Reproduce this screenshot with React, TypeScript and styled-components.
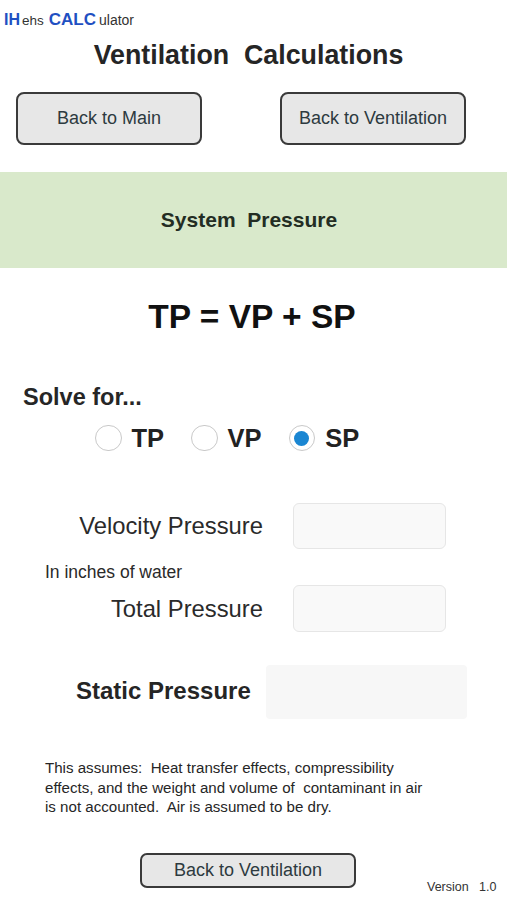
import React, { useState } from "react";
import styled, { createGlobalStyle } from "styled-components";

const Global = createGlobalStyle`
  html, body { margin: 0; padding: 0; background: #ffffff; }
  body { font-family: "Liberation Sans", Arial, Helvetica, sans-serif; color: #222; }
  * { box-sizing: border-box; }
`;

const Page = styled.div`
  width: 507px;
  min-height: 900px;
  display: flex;
  flex-direction: column;
  background: #fff;
`;

const Logo = styled.div`
  padding: 10px 0 0 4px;
  height: 30px;
  line-height: 20px;
  white-space: nowrap;
  color: #333;
`;

const LogoPart = styled.span<{ $strong?: boolean; $size: number; $gap: number }>`
  font-size: ${(p) => p.$size}px;
  font-weight: ${(p) => (p.$strong ? 700 : 400)};
  color: ${(p) => (p.$strong ? "#1f50c2" : "#333")};
  margin-right: ${(p) => p.$gap}px;
`;

const Title = styled.h1`
  margin: 9px 0 0;
  padding-right: 10px;
  font-size: 26.8px;
  line-height: 32px;
  font-weight: 700;
  text-align: center;
  color: #252525;
  white-space: pre;
`;

const TopButtons = styled.div`
  margin-top: 21px;
  display: flex;
  gap: 78px;
  padding-left: 16px;
`;

const Button = styled.button<{ $w: number; $h: number }>`
  width: ${(p) => p.$w}px;
  height: ${(p) => p.$h}px;
  border: 2px solid #3a3a3a;
  border-radius: ${(p) => (p.$h > 40 ? 8 : 7)}px;
  background: #e7e7e7;
  font-family: "Liberation Sans", Arial, sans-serif;
  font-size: 18px;
  color: #2d3a40;
  padding: 0;
  cursor: pointer;
`;

const Band = styled.div`
  margin-top: 27px;
  height: 96px;
  padding-right: 9px;
  background: #d9e9cb;
  display: flex;
  align-items: center;
  justify-content: center;
  font-size: 21px;
  font-weight: 700;
  color: #232d23;
  white-space: pre;
`;

const Formula = styled.div`
  margin-top: 29px;
  padding-right: 3px;
  line-height: 40px;
  font-size: 33.5px;
  font-weight: 700;
  text-align: center;
  color: #111;
`;

const SolveFor = styled.div`
  margin-top: 46px;
  padding-left: 23px;
  line-height: 28px;
  font-size: 23.5px;
  font-weight: 700;
  color: #262626;
`;

const RadioRow = styled.div`
  margin-top: 13px;
  display: flex;
  padding-left: 95px;
  gap: 27px;
  height: 28px;
  align-items: center;
`;

const RadioItem = styled.label`
  display: flex;
  align-items: center;
  gap: 10px;
  font-size: 25.5px;
  font-weight: 700;
  color: #222;
  cursor: pointer;
`;

const Circle = styled.span<{ $on: boolean }>`
  width: 26.5px;
  height: 26.5px;
  border-radius: 50%;
  border: 1.5px solid #c9c9c9;
  background: #fff;
  display: flex;
  align-items: center;
  justify-content: center;
  &::after {
    content: "";
    width: 15px;
    height: 15px;
    border-radius: 50%;
    background: ${(p) => (p.$on ? "#1a86d2" : "transparent")};
  }
`;

const FieldRow = styled.div<{ $mt: number; $h: number }>`
  margin-top: ${(p) => p.$mt}px;
  display: grid;
  grid-template-columns: 263px 153px;
  column-gap: 30px;
  height: ${(p) => p.$h}px;
  align-items: center;
`;

const FieldLabel = styled.div`
  text-align: right;
  font-size: 23.8px;
  color: #2a2a2a;
  white-space: nowrap;
`;

const Input = styled.div`
  height: 100%;
  border: 1px solid #e6e6e6;
  border-radius: 6px;
  background: #f9f9f9;
`;

const Unit = styled.div`
  margin-top: 13px;
  padding-left: 45px;
  line-height: 20px;
  font-size: 17.5px;
  color: #2a2a2a;
`;

const ResultRow = styled.div`
  margin-top: 33px;
  display: flex;
  align-items: center;
  padding-left: 76px;
  gap: 16px;
  height: 54px;
`;

const ResultLabel = styled.div`
  width: 174px;
  font-size: 24px;
  font-weight: 700;
  color: #252525;
  white-space: nowrap;
  margin-bottom: 3px;
`;

const ResultBox = styled.div`
  width: 201px;
  height: 54px;
  background: #f7f7f7;
  border-radius: 4px;
`;

const Note = styled.p`
  margin: 39px 0 0;
  padding-left: 45px;
  font-size: 15.1px;
  line-height: 19.5px;
  color: #262626;
  white-space: pre;
`;

const Footer = styled.div`
  margin-top: 36px;
  display: flex;
  align-items: flex-end;
  padding-left: 140px;
`;

const Version = styled.div`
  margin-left: 71px;
  margin-bottom: -6px;
  font-size: 12.5px;
  line-height: 14px;
  color: #333;
  white-space: pre;
`;

export default function App() {
  const [sel, setSel] = useState("SP");
  return (
    <Page>
      <Global />
      <Logo>
        <LogoPart $strong $size={16} $gap={2}>IH</LogoPart>
        <LogoPart $size={13.5} $gap={5}>ehs</LogoPart>
        <LogoPart $strong $size={17} $gap={3}>CALC</LogoPart>
        <LogoPart $size={14} $gap={0}>ulator</LogoPart>
      </Logo>
      <Title>{"Ventilation  Calculations"}</Title>
      <TopButtons>
        <Button $w={186} $h={53}>Back to Main</Button>
        <Button $w={186} $h={53}>Back to Ventilation</Button>
      </TopButtons>
      <Band>{"System  Pressure"}</Band>
      <Formula>TP = VP + SP</Formula>
      <SolveFor>Solve for...</SolveFor>
      <RadioRow>
        {["TP", "VP", "SP"].map((k) => (
          <RadioItem key={k} onClick={() => setSel(k)}>
            <Circle $on={sel === k} />
            {k}
          </RadioItem>
        ))}
      </RadioRow>
      <FieldRow $mt={51} $h={46}>
        <FieldLabel>Velocity Pressure</FieldLabel>
        <Input />
      </FieldRow>
      <Unit>In inches of water</Unit>
      <FieldRow $mt={3} $h={47}>
        <FieldLabel>Total Pressure</FieldLabel>
        <Input />
      </FieldRow>
      <ResultRow>
        <ResultLabel>Static Pressure</ResultLabel>
        <ResultBox />
      </ResultRow>
      <Note>
        {"This assumes:  Heat transfer effects, compressibility\neffects, and the weight and volume of  contaminant in air\nis not accounted.  Air is assumed to be dry."}
      </Note>
      <Footer>
        <Button $w={216} $h={35}>Back to Ventilation</Button>
        <Version>{"Version   1.0"}</Version>
      </Footer>
    </Page>
  );
}
